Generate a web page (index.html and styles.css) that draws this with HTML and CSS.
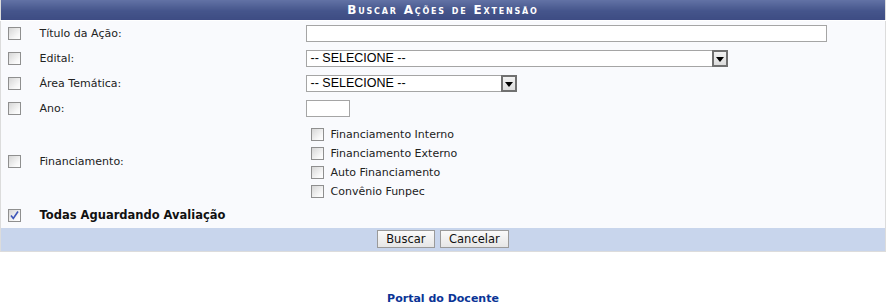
FILE: index.html
```html
<!DOCTYPE html>
<html lang="pt-BR">
<head>
    <meta charset="UTF-8">
    <title>Buscar Ações de Extensão</title>
    <link rel="stylesheet" href="styles.css">
</head>
<body>
<table class="formulario">
    <colgroup>
        <col class="col-check">
        <col class="col-label">
        <col>
    </colgroup>
    <thead>
        <tr><th colspan="3">Buscar Ações de Extensão</th></tr>
    </thead>
    <tbody>
        <tr>
            <td class="check"><span class="chk"></span></td>
            <td class="rotulo">Título da Ação:</td>
            <td><span class="campo titulo"></span></td>
        </tr>
        <tr>
            <td class="check"><span class="chk"></span></td>
            <td class="rotulo">Edital:</td>
            <td>
                <span class="combo edital">
                    <span class="combo-texto">-- SELECIONE --</span>
                    <span class="seta"><svg width="8" height="5" viewBox="0 0 8 5"><path d="M0 0H8L4 5Z" fill="#000"/></svg></span>
                </span>
            </td>
        </tr>
        <tr>
            <td class="check"><span class="chk"></span></td>
            <td class="rotulo">Área Temática:</td>
            <td>
                <span class="combo area">
                    <span class="combo-texto">-- SELECIONE --</span>
                    <span class="seta"><svg width="8" height="5" viewBox="0 0 8 5"><path d="M0 0H8L4 5Z" fill="#000"/></svg></span>
                </span>
            </td>
        </tr>
        <tr>
            <td class="check"><span class="chk"></span></td>
            <td class="rotulo">Ano:</td>
            <td><span class="campo ano"></span></td>
        </tr>
        <tr class="financiamento">
            <td class="check"><span class="chk"></span></td>
            <td class="rotulo">Financiamento:</td>
            <td>
                <div class="opcoes">
                    <div class="opcao"><span class="chk"></span>Financiamento Interno</div>
                    <div class="opcao"><span class="chk"></span>Financiamento Externo</div>
                    <div class="opcao"><span class="chk"></span>Auto Financiamento</div>
                    <div class="opcao"><span class="chk"></span>Convênio Funpec</div>
                </div>
            </td>
        </tr>
        <tr>
            <td class="check">
                <span class="chk marcado"><svg width="11" height="11" viewBox="0 0 11 11"><path d="M2 5.5L4.3 8.5L9 1.5" fill="none" stroke="#3e56b8" stroke-width="1.6"/></svg></span>
            </td>
            <td class="rotulo forte" colspan="2">Todas Aguardando Avaliação</td>
        </tr>
    </tbody>
    <tfoot>
        <tr>
            <td colspan="3">
                <button type="button">Buscar</button>
                <button type="button">Cancelar</button>
            </td>
        </tr>
    </tfoot>
</table>

<div class="rodape">Portal do Docente</div>
</body>
</html>
```

FILE: styles.css
```css
body {
    margin: 0;
    background: #fff;
    font-family: "DejaVu Sans", Verdana, sans-serif;
    font-size: 11px;
    color: #222;
}

.formulario {
    width: 886px;
    border-collapse: collapse;
    table-layout: fixed;
    background: #f9fafd;
    border: 1px solid #dcdcdc;
    border-top: none;
}
.col-check {
    width: 39px;
}
.col-label {
    width: 266px;
}
.formulario td {
    padding: 0;
    vertical-align: middle;
}
.formulario thead th {
    height: 20px;
    padding: 0;
    background: linear-gradient(#6272a5, #45558b 55%, #3d4c83);
    border-bottom: 1px solid #fff;
    color: #fff;
    font-size: 12px;
    font-weight: bold;
    font-variant: small-caps;
    letter-spacing: 1.8px;
    text-align: center;
}
.formulario tbody tr {
    height: 25px;
}
.check {
    padding-left: 7px !important;
}

/* caixas de seleção */
.chk {
    display: inline-block;
    width: 11px;
    height: 11px;
    border: 1px solid #8f8f8f;
    background: linear-gradient(135deg, #d6d6d6, #f7f7f7 70%, #fff);
    vertical-align: middle;
    position: relative;
}
.chk svg {
    position: absolute;
    left: 0;
    top: 0;
}

/* campos de texto */
.campo {
    display: block;
    height: 15px;
    border: 1px solid #a5a5a5;
    background: #fff;
}
.campo.titulo {
    width: 519px;
}
.campo.ano {
    width: 42px;
}

.combo {
    display: flex;
    align-items: stretch;
    height: 15px;
    border: 1px solid #a5a5a5;
    background: #fff;
    font-family: "Liberation Sans", Arial, sans-serif;
    font-size: 12.5px;
    color: #000;
}
.combo.edital {
    width: 420px;
}
.combo.area {
    width: 209px;
}
.combo-texto {
    flex: 1;
    padding-left: 4px;
    line-height: 15px;
}
.seta {
    width: 12px;
    margin: -1px -1px -1px 0;
    border: 2px solid #707070;
    background: linear-gradient(#f2f2f2, #dcdcdc);
    display: flex;
    justify-content: center;
    align-items: flex-end;
    padding-bottom: 3px;
}

/* financiamento */
.financiamento .opcoes {
    padding: 4px 0 2px 5px;
}
.opcao {
    height: 19px;
    display: flex;
    align-items: center;
}
.opcao .chk {
    margin-right: 7px;
}

.forte {
    font-weight: bold;
    font-size: 11.5px;
    color: #111;
}

.formulario tfoot td {
    height: 23px;
    background: #c8d5ec;
    text-align: center;
}
.formulario tfoot button {
    height: 18px;
    padding: 0 8px;
    margin: 0 1px;
    border: 1px solid #9a9a9a;
    background: linear-gradient(#fafafa, #e6e6e6);
    font-family: "DejaVu Sans", Verdana, sans-serif;
    font-size: 11.5px;
    color: #111;
    vertical-align: middle;
}

.rodape {
    margin-top: 40px;
    text-align: center;
    font-weight: bold;
    font-size: 11px;
    color: #0a3496;
}
```
